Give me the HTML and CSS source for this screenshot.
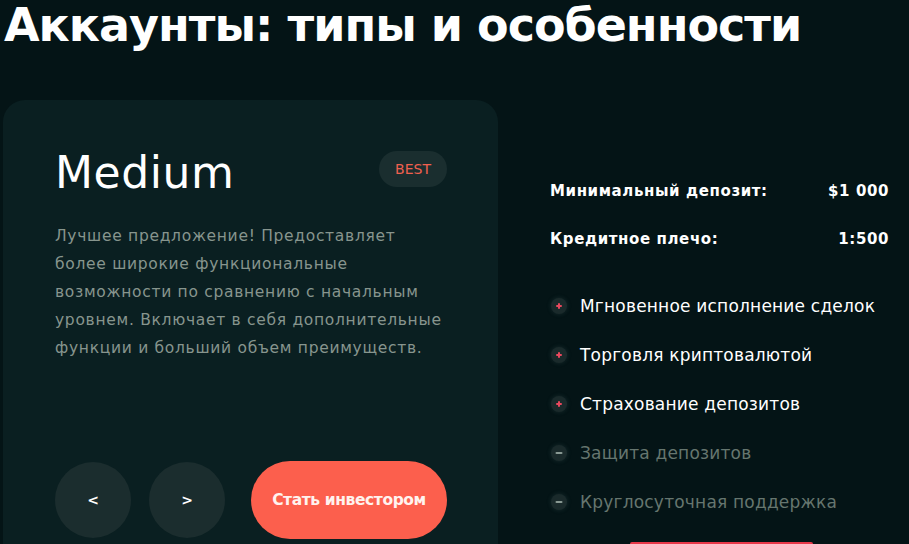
FILE: index.html
```html
<!DOCTYPE html>
<html lang="ru">
<head>
<meta charset="utf-8">
<link rel="stylesheet" href="styles.css">
</head>
<body>
<div class="page">
  <h1 class="title">Аккаунты: типы и особенности</h1>
  <div class="content">
    <div class="card">
      <div class="card-head">
        <h2 class="plan">Medium</h2>
        <span class="badge">BEST</span>
      </div>
      <p class="desc">Лучшее предложение! Предоставляет<br>более широкие функциональные<br>возможности по сравнению с начальным<br>уровнем. Включает в себя дополнительные<br>функции и больший объем преимуществ.</p>
      <div class="actions">
        <button class="nav">&lt;</button>
        <button class="nav">&gt;</button>
        <button class="cta">Стать инвестором</button>
      </div>
    </div>
    <div class="side">
      <div class="specs">
        <div class="spec"><span>Минимальный депозит:</span><span>$1 000</span></div>
        <div class="spec"><span>Кредитное плечо:</span><span>1:500</span></div>
      </div>
      <ul class="features">
        <li class="on"><span class="dot"></span>Мгновенное исполнение сделок</li>
        <li class="on"><span class="dot"></span>Торговля криптовалютой</li>
        <li class="on"><span class="dot"></span>Страхование депозитов</li>
        <li class="off"><span class="dot"></span>Защита депозитов</li>
        <li class="off"><span class="dot"></span>Круглосуточная поддержка</li>
      </ul>
      <div class="bottom-btn"></div>
    </div>
  </div>
</div>
</body>
</html>
```
FILE: styles.css
```css
html, body {
  margin: 0;
  padding: 0;
  background: #041416;
  height: 544px;
  overflow: hidden;
}
body {
  font-family: "DejaVu Sans", "Open Sans", sans-serif;
  color: #ffffff;
}
.page {
  padding: 0 0 0 3px;
}
.title {
  margin: 0;
  padding-left: 1px;
  font-family: "DejaVu Sans", sans-serif;
  font-weight: 700;
  font-size: 46px;
  line-height: 50px;
  letter-spacing: -1px;
  color: #ffffff;
}
.content {
  display: grid;
  grid-template-columns: 495px 339px;
  column-gap: 52px;
  margin-top: 50px;
}
.card {
  background: #0a1f21;
  border-radius: 22px;
  padding: 43px 51px 0 52px;
  height: 480px;
  box-sizing: border-box;
}
.card-head {
  display: flex;
  justify-content: space-between;
  align-items: center;
}
.plan {
  margin: 0;
  font-weight: 400;
  font-size: 44px;
  line-height: 60px;
  letter-spacing: 0.6px;
}
.badge {
  display: inline-flex;
  align-items: center;
  justify-content: center;
  width: 68px;
  height: 36px;
  border-radius: 18px;
  background: #1a2e2f;
  color: #f0604f;
  font-size: 14px;
  margin-top: -8px;
}
.desc {
  margin: 19px 0 0;
  white-space: nowrap;
  font-size: 15.5px;
  line-height: 28px;
  letter-spacing: 0.7px;
  color: #87958e;
}
.actions {
  display: flex;
  align-items: center;
  gap: 18px;
  margin-top: 99px;
}
.nav {
  width: 76px;
  height: 76px;
  border-radius: 50%;
  border: none;
  background: #1b2d2e;
  color: #ffffff;
  font-family: "DejaVu Sans", sans-serif;
  font-weight: 700;
  font-size: 14px;
  padding: 0;
}
.cta {
  margin-left: 8px;
  width: 196px;
  height: 78px;
  border: none;
  border-radius: 39px;
  background: #fc5f4d;
  color: #fff3ef;
  font-family: "DejaVu Sans", sans-serif;
  font-weight: 700;
  font-size: 15.5px;
  letter-spacing: -0.4px;
  padding: 0;
}
.side {
  padding-top: 81px;
}
.specs {
  display: flex;
  flex-direction: column;
  gap: 28px;
}
.spec {
  display: flex;
  justify-content: space-between;
  font-weight: 700;
  font-size: 15px;
  line-height: 20px;
  letter-spacing: 0.6px;
}
.features {
  list-style: none;
  margin: 46px 0 0;
  padding: 0;
  display: flex;
  flex-direction: column;
  gap: 27px;
}
.features li {
  display: flex;
  align-items: center;
  gap: 13px;
  font-size: 17px;
  line-height: 22px;
  letter-spacing: 0.2px;
}
.features li.off {
  color: #66766f;
}
.dot {
  position: relative;
  width: 16px;
  height: 16px;
  border-radius: 50%;
  background: #1a2a2b;
  margin-left: 1px;
  box-shadow: 0 0 4px rgba(60, 90, 90, 0.35);
}
.dot::before,
.dot::after {
  content: "";
  position: absolute;
  left: 50%;
  top: 50%;
  background: #e8485e;
  border-radius: 1px;
}
.dot::before {
  width: 6px;
  height: 2px;
  transform: translate(-50%, -50%);
}
.on .dot::after {
  width: 2px;
  height: 6px;
  transform: translate(-50%, -50%);
}
.off .dot::before {
  background: #8a9a94;
  width: 7px;
}
.off .dot::after {
  display: none;
}
.bottom-btn {
  margin: 29px 0 0 80px;
  width: 183px;
  height: 40px;
  background: #e8384a;
  border-radius: 2px;
}
```
